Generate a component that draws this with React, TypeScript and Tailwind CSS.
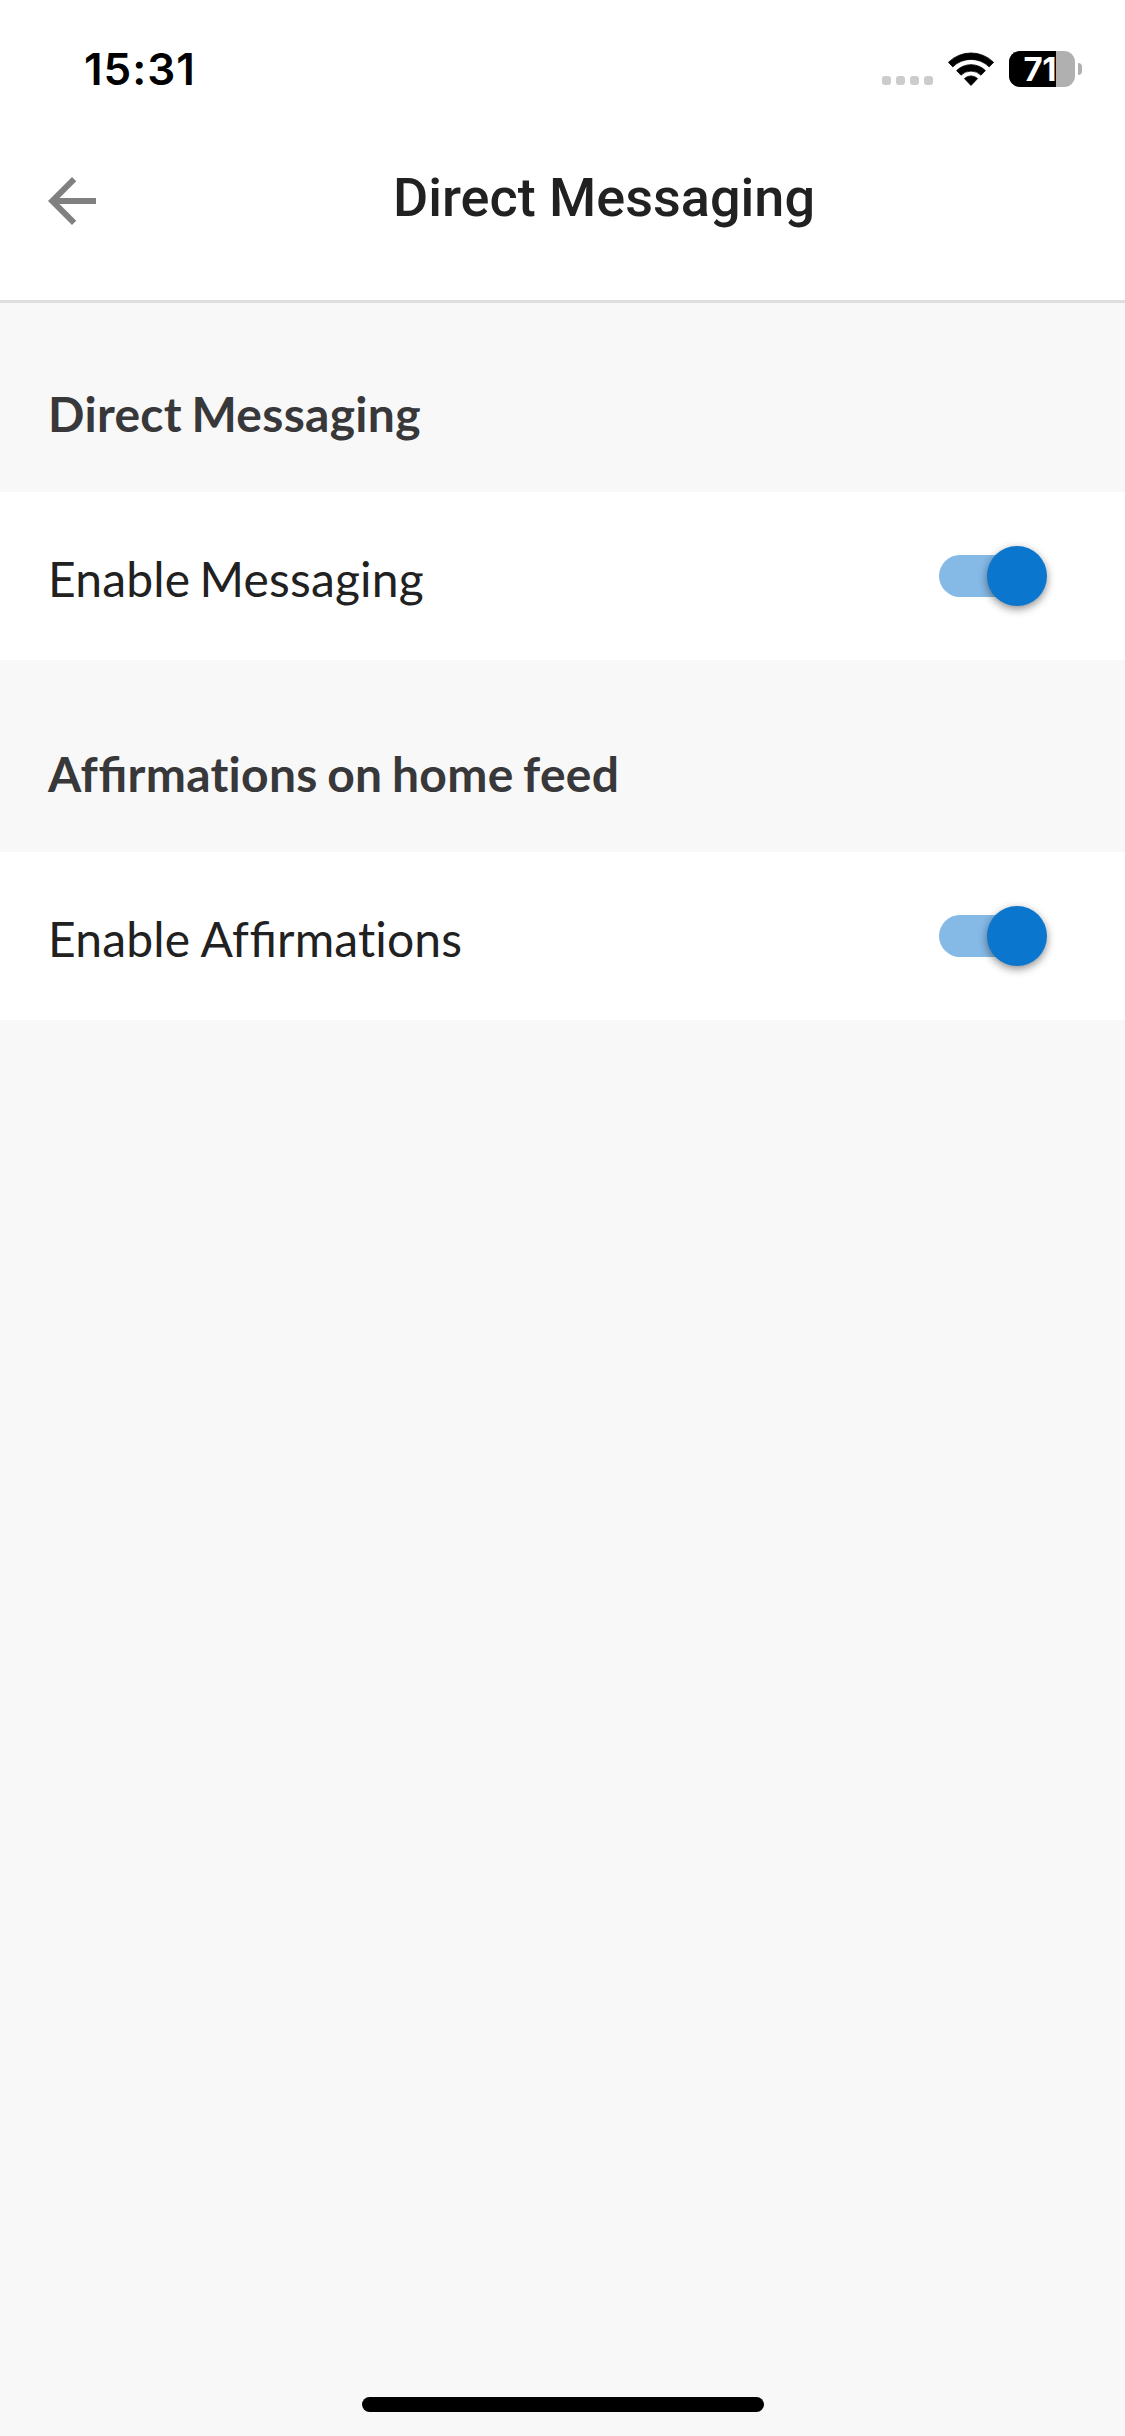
import { useState } from "react";

const SECTIONS = [
  {
    id: "messaging",
    title: "Direct Messaging",
    label: "Enable Messaging",
    labelClass: "[word-spacing:-3px]",
  },
  {
    id: "affirmations",
    title: "Affirmations on home feed",
    label: "Enable Affirmations",
    labelClass: "[word-spacing:-0.5px]",
  },
];

export default function App() {
  const [enabled, setEnabled] = useState<Record<string, boolean>>({
    messaging: true,
    affirmations: true,
  });

  const toggle = (id: string) =>
    setEnabled((prev) => ({ ...prev, [id]: !prev[id] }));

  return (
    <main className="flex h-[2436px] w-[1125px] flex-col overflow-hidden bg-[#f8f8f8] font-['Lato',sans-serif]">
      <div className="h-[303px] shrink-0 border-b-3 border-[#dedede] bg-white">
        <StatusBar />
        <header className="flex h-[132px] items-center pl-9">
          <button type="button" aria-label="Back" className="mt-[6px]">
            <svg viewBox="0 0 24 24" className="size-[72px]" fill="#808080">
              <path d="M20 11H7.83l5.59-5.59L12 4l-8 8 8 8 1.41-1.41L7.83 13H20v-2z" />
            </svg>
          </button>
          <h1 className="ml-[285px] font-['Roboto',sans-serif] text-[54px] leading-[64px] font-medium whitespace-nowrap text-[#212121]">
            Direct Messaging
          </h1>
        </header>
      </div>

      {SECTIONS.map((s, i) => (
        <section key={s.id}>
          <div
            className={`flex items-end px-12 pb-[49px] ${
              i === 0 ? "h-[189px]" : "h-[192px]"
            }`}
          >
            <h2 className="text-[48px] leading-[58px] font-bold tracking-[0.3px] text-[#38383a] [word-spacing:-2.5px]">
              <Ligated text={s.title} />
            </h2>
          </div>
          <div className="flex h-[168px] items-center justify-between bg-white pr-[78px] pl-12">
            <span
              className={`mt-[5px] text-[48px] leading-[58px] tracking-[0.15px] text-[#212121] ${s.labelClass}`}
            >
              <Ligated text={s.label} />
            </span>
            <Toggle on={enabled[s.id]} onClick={() => toggle(s.id)} />
          </div>
        </section>
      ))}

      <div className="mx-auto mt-auto mb-6 h-[15px] w-[402px] shrink-0 rounded-full bg-black" />
    </main>
  );
}

// Letter spacing turns ligatures off, so "fi" is reset to keep its joined form.
function Ligated({ text }: { text: string }) {
  return (
    <>
      {text.split(/(fi)/).map((part, i) =>
        part === "fi" ? (
          <span key={i} className="ml-[0.5px] tracking-normal">
            {part}
          </span>
        ) : (
          part
        )
      )}
    </>
  );
}

function StatusBar() {
  return (
    <div className="flex h-[132px] items-start justify-between pr-[43px] pl-[84px] font-['Inter',sans-serif]">
      <span className="mt-[43px] text-[44px] leading-[52px] font-semibold tracking-[1px] text-black">
        15:31
      </span>
      <div className="mt-[51px] flex h-9 items-center">
        <div className="mt-[23px] flex gap-[5px]">
          {[0, 1, 2, 3].map((n) => (
            <span key={n} className="size-[9px] rounded-[3px] bg-[#cccccc]" />
          ))}
        </div>
        <WifiIcon />
        <div className="ml-[15px] flex h-9 w-[66px] rounded-[11px] bg-[#b0b0b0]">
          <div className="flex h-full w-[47px] items-center justify-end rounded-l-[11px] bg-black">
            <span className="text-[33px] leading-9 font-bold tracking-[-0.5px] text-white">
              71
            </span>
          </div>
        </div>
        <div className="ml-[3px] h-3 w-1 rounded-r-full bg-[#b0b0b0]" />
      </div>
    </div>
  );
}

function WifiIcon() {
  return (
    <svg viewBox="0 0 46 34" className="ml-[15px] h-[34px] w-[46px]">
      <path
        d="M0.4 10.3A32 32 0 0 1 45.6 10.3L41.2 14.9A25.8 25.8 0 0 0 4.8 14.9ZM8.6 18.6A20.4 20.4 0 0 1 37.4 18.6L33 23.2A14.2 14.2 0 0 0 13 23.2ZM16.4 26.6A9.4 9.4 0 0 1 29.6 26.6L23 33.5Z"
        fill="#000"
        stroke="#000"
        strokeWidth="0.8"
        strokeLinejoin="round"
      />
    </svg>
  );
}

function Toggle({ on, onClick }: { on: boolean; onClick: () => void }) {
  return (
    <button
      type="button"
      role="switch"
      aria-checked={on}
      onClick={onClick}
      className={`flex h-[42px] w-[108px] items-center rounded-full ${
        on
          ? "justify-end bg-linear-to-r from-[#85b9e6] from-90% to-transparent to-90%"
          : "justify-start bg-gray-300"
      }`}
    >
      <span
        className={`size-[60px] shrink-0 rounded-full shadow-[0_3px_9px_rgba(0,0,0,0.45)] ${
          on ? "bg-[#0b76cd]" : "bg-gray-50"
        }`}
      />
    </button>
  );
}
